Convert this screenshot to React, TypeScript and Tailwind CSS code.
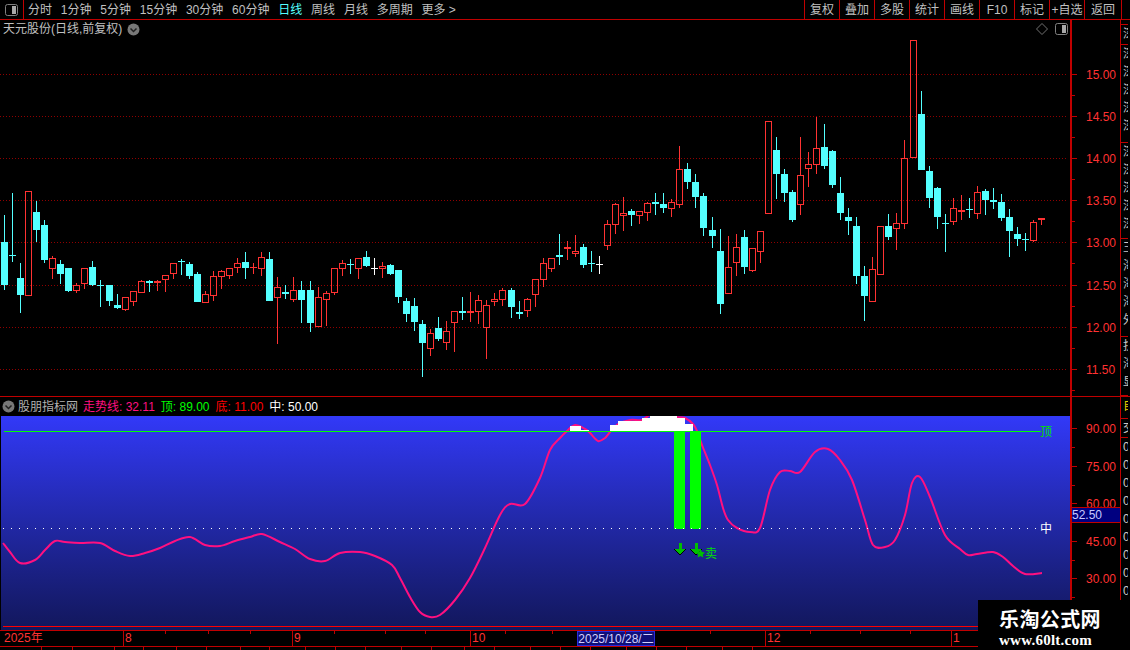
const font = "font-['Liberation_Sans','Noto_Sans_CJK_SC',sans-serif]"

type Kind = "r" | "c" | "w"
type Row = [number, number, number, number, Kind]

// hi, body top, body bottom, lo - read off 3x crops, y0 is the crop's origin
const seg = (y0: number, rows: Row[]): Row[] =>
  rows.map(([h, t, b, l, k]) => [y0 + h / 3, y0 + t / 3, y0 + b / 3, y0 + l / 3, k])

const candles: Row[] = [
  ...seg(180, [
    [105, 186, 315, 330, "c"], [40, 226, 228, 245, "c"], [250, 294, 345, 398, "c"], [34, 34, 347, 347, "r"],
    [63, 96, 150, 186, "c"], [120, 135, 240, 248, "c"], [228, 235, 266, 297, "r"], [240, 252, 282, 312, "c"],
    [264, 264, 333, 336, "c"], [309, 316, 332, 338, "r"], [265, 265, 311, 327, "r"], [243, 261, 315, 318, "c"],
    [300, 315, 317, 381, "c"], [315, 315, 363, 378, "c"], [342, 375, 384, 387, "c"], [352, 352, 389, 393, "r"],
    [334, 334, 365, 378, "r"], [300, 304, 338, 338, "r"], [300, 303, 309, 336, "c"], [300, 304, 308, 333, "r"],
    [286, 286, 299, 336, "r"], [250, 250, 281, 297, "r"], [237, 244, 247, 285, "c"], [246, 252, 288, 297, "c"],
    [276, 282, 366, 366, "c"], [333, 343, 368, 368, "r"], [273, 289, 347, 363, "r"], [270, 274, 290, 327, "r"],
    [265, 265, 287, 297, "r"], [234, 250, 263, 279, "r"], [216, 246, 264, 297, "c"], [249, 262, 265, 282, "r"],
    [216, 232, 266, 288, "r"], [216, 237, 363, 363, "c"], [291, 322, 353, 492, "r"], [315, 336, 342, 357, "c"],
    [291, 331, 359, 366, "r"], [303, 330, 360, 429, "c"], [303, 330, 429, 456, "c"], [321, 352, 440, 440, "r"],
    [333, 340, 359, 438, "r"], [265, 265, 338, 345, "r"], [240, 250, 266, 288, "r"], [237, 252, 254, 282, "c"],
    [235, 235, 266, 297, "r"],
  ]),
  ...seg(190, [
    [183, 201, 228, 231, "c"], [204, 234, 236, 255, "w"], [216, 229, 236, 264, "r"], [222, 225, 252, 255, "c"],
    [240, 240, 321, 339, "c"], [324, 333, 372, 396, "c"], [324, 348, 396, 423, "c"], [390, 402, 459, 561, "c"],
    [417, 430, 476, 498, "r"], [381, 414, 447, 453, "c"], [393, 424, 458, 480, "r"], [364, 364, 398, 486, "r"],
    [321, 363, 368, 390, "c"], [306, 364, 368, 396, "r"], [315, 331, 365, 402, "r"], [330, 346, 413, 507, "r"],
    [309, 328, 335, 348, "r"], [294, 301, 329, 348, "r"], [294, 300, 351, 384, "c"], [333, 366, 372, 387, "c"],
    [325, 328, 362, 381, "r"], [268, 268, 314, 351, "r"], [204, 220, 269, 291, "r"], [205, 205, 236, 246, "r"],
    [132, 195, 201, 225, "c"], [153, 171, 176, 210, "r"], [135, 184, 191, 201, "r"], [162, 171, 225, 234, "c"],
    [183, 219, 221, 246, "c"], [198, 222, 224, 252, "w"], [90, 103, 167, 180, "r"], [40, 43, 104, 132, "r"],
    [21, 70, 77, 123, "r"], [57, 63, 75, 108, "c"], [63, 64, 77, 102, "r"], [37, 40, 68, 93, "r"],
    [9, 36, 42, 75, "c"], [9, 42, 54, 69, "c"], [27, 37, 56, 81, "r"],
  ]),
  ...seg(130, [
    [48, 118, 224, 234, "r"], [99, 117, 156, 177, "c"], [132, 156, 201, 234, "c"], [189, 198, 294, 318, "c"],
  ]),
  ...seg(30, [
    [561, 600, 618, 654, "c"], [597, 663, 822, 852, "c"], [618, 712, 791, 791, "r"], [612, 652, 698, 738, "r"],
    [600, 621, 711, 732, "c"], [655, 655, 722, 725, "r"], [604, 604, 665, 699, "r"], [274, 274, 551, 551, "r"],
    [321, 360, 432, 507, "c"], [417, 432, 489, 516, "c"], [480, 486, 570, 576, "c"], [321, 436, 524, 555, "r"],
    [366, 403, 416, 471, "r"], [261, 355, 404, 432, "r"], [282, 351, 408, 417, "c"], [360, 363, 465, 474, "c"],
    [441, 489, 549, 570, "c"], [534, 561, 573, 615, "c"], [561, 588, 738, 762, "c"], [708, 738, 798, 873, "c"],
    [681, 718, 815, 815, "r"], [589, 589, 734, 734, "r"], [552, 588, 621, 630, "c"], [549, 580, 596, 660, "r"],
    [330, 385, 581, 597, "r"], [31, 31, 383, 383, "r"], [183, 252, 420, 420, "c"], [408, 423, 504, 534, "c"],
    [471, 474, 561, 597, "c"], [552, 579, 581, 666, "c"], [504, 535, 575, 585, "r"], [495, 541, 545, 570, "r"],
    [504, 537, 539, 564, "c"], [468, 487, 551, 567, "r"], [477, 483, 510, 555, "c"], [474, 510, 515, 537, "c"],
    [492, 516, 564, 573, "c"], [537, 561, 603, 681, "c"], [591, 612, 627, 648, "c"], [609, 627, 629, 663, "c"],
    [570, 577, 632, 636, "r"], [565, 565, 571, 585, "r"],
  ]),
]

const priceTicks = [
  [74, "15.00"], [116, "14.50"], [158, "14.00"], [200, "13.50"],
  [242, "13.00"], [285, "12.50"], [327, "12.00"], [369, "11.50"],
] as const

const indicatorTicks = [
  [428, "90.00"], [466, "75.00"], [503, "60.00"], [541, "45.00"], [578, "30.00"],
] as const

const trendPoints = [
  [3, 543], [10, 552], [20, 563], [35, 560], [45, 550], [55, 541], [65, 542], [80, 543], [100, 543], [115, 551],
  [130, 556], [145, 553], [160, 548], [175, 541], [190, 537], [205, 545], [220, 546], [235, 541], [250, 537], [262, 534],
  [280, 542], [295, 549], [310, 559], [325, 561], [340, 553], [360, 552], [375, 556], [392, 565], [400, 578], [410, 597],
  [420, 612], [430, 617], [440, 615], [455, 600], [470, 578], [485, 548], [500, 515], [510, 504], [525, 504], [540, 478],
  [550, 450], [560, 438], [567, 431], [575, 425], [585, 429], [590, 433], [598, 441], [605, 438], [610, 432], [618, 424],
  [630, 420], [642, 420], [650, 415], [660, 415], [670, 415], [677, 417], [685, 418], [693, 424], [697, 431], [702, 445],
  [710, 465], [717, 485], [723, 508], [728, 520], [737, 528], [750, 532], [760, 528], [770, 490], [780, 472], [790, 471],
  [800, 472], [815, 452], [828, 449], [840, 460], [852, 480], [865, 520], [873, 545], [885, 547], [895, 540], [905, 515],
  [912, 483], [920, 477], [930, 497], [945, 535], [960, 549], [968, 555], [977, 554], [993, 552], [1003, 557], [1013, 566],
  [1025, 574], [1042, 573],
]

// catmull-rom through the read-off points, the original curve has no corners
const smoothPath = (pts: number[][]) => {
  let d = `M${pts[0][0]} ${pts[0][1]}`
  for (let i = 0; i < pts.length - 1; i++) {
    const p0 = pts[Math.max(i - 1, 0)]
    const p1 = pts[i]
    const p2 = pts[i + 1]
    const p3 = pts[Math.min(i + 2, pts.length - 1)]
    d += ` C${p1[0] + (p2[0] - p0[0]) / 6} ${p1[1] + (p2[1] - p0[1]) / 6} ${p2[0] - (p3[0] - p1[0]) / 6} ${p2[1] - (p3[1] - p1[1]) / 6} ${p2[0]} ${p2[1]}`
  }
  return d
}

// part of the curve above the 顶 line is filled white
const whiteSteps = [
  [570, 581, 426], [581, 589, 430], [610, 618, 425], [618, 642, 421],
  [642, 650, 418], [650, 677, 416], [677, 685, 418], [685, 693, 424],
]

const leftItems = ["分时", "1分钟", "5分钟", "15分钟", "30分钟", "60分钟", "日线", "周线", "月线", "多周期", "更多 >"]
const rightItems = ["复权", "叠加", "多股", "统计", "画线", "F10", "标记", "+自选", "返回"]

const Toggle = ({ className }: { className?: string }) => (
  <svg width="13" height="12" viewBox="0 0 13 12" className={className}>
    <rect x="0.5" y="0.5" width="12" height="11" rx="2" fill="none" stroke="#808080" />
    <rect x="7" y="2" width="4" height="8" fill="#a8a8a8" />
  </svg>
)

const Chevron = () => (
  <svg width="13" height="13" viewBox="0 0 13 13" className="shrink-0">
    <circle cx="6.5" cy="6.5" r="6" fill="#787878" />
    <path d="M3.5 5.5 L6.5 8.5 L9.5 5.5" fill="none" stroke="#202020" strokeWidth="1.5" />
  </svg>
)

const Candle = ({ row, i }: { row: Row; i: number }) => {
  const [hi, top, bottom, lo, kind] = row
  const left = Math.round(1 + i * 8.04)
  const mid = left + 3.5
  const color = kind === "r" ? "#ff3232" : kind === "c" ? "#54ffff" : "#ffffff"
  const t = Math.round(top)
  const b = Math.max(Math.round(bottom), t + 1)
  return (
    <g shapeRendering="crispEdges">
      <line x1={mid} x2={mid} y1={Math.round(hi)} y2={t} stroke={color} />
      <line x1={mid} x2={mid} y1={b} y2={Math.round(lo)} stroke={color} />
      {kind === "r" && b - t > 2 ? (
        <rect x={left + 0.5} y={t + 0.5} width={6} height={b - t - 1} fill="none" stroke={color} />
      ) : (
        <rect x={left} y={t} width={7} height={b - t} fill={color} />
      )}
    </g>
  )
}

const PriceChart = () => (
  <div className="relative h-[376px] w-[1070px] shrink-0">
    <svg width="1070" height="376" viewBox="0 20 1070 376" className="block">
      {priceTicks.map(([y]) => (
        <line key={y} x1="0" x2="1066" y1={y + 0.5} y2={y + 0.5} stroke="#900000" strokeDasharray="1 2" shapeRendering="crispEdges" />
      ))}
      {candles.map((row, i) => (
        <Candle key={i} row={row} i={i} />
      ))}
    </svg>
    <div className="absolute left-[3px] top-[2px] flex items-center gap-[5px] text-[12px] leading-[14px] text-[#c0c0c0]">
      <span>天元股份(日线,前复权)</span>
      <Chevron />
    </div>
    <svg width="12" height="12" viewBox="0 0 12 12" className="absolute left-[1036px] top-[3px]">
      <path d="M6 0.5 L11.5 6 L6 11.5 L0.5 6 Z" fill="none" stroke="#707070" />
    </svg>
    <Toggle className="absolute left-[1055px] top-[3px]" />
  </div>
)

const Axis = ({ top, height, ticks, minor, children }: {
  top: number
  height: number
  ticks: readonly (readonly [number, string])[]
  minor: number[]
  children?: React.ReactNode
}) => (
  <div className="relative w-[50px] shrink-0 border-l-2 border-[#c00000]" style={{ height }}>
    <svg width="50" height={height} viewBox={`1072 ${top} 50 ${height}`} className="block">
      {ticks.map(([y, label]) => (
        <g key={label}>
          <line x1="1072" x2="1077" y1={y + 0.5} y2={y + 0.5} stroke="#c00000" shapeRendering="crispEdges" />
          <text x="1086" y={y + 5} className="fill-[#ff3232] text-[12px]">{label}</text>
        </g>
      ))}
      {minor.map((y) => (
        <line key={y} x1="1072" x2="1075" y1={y + 0.5} y2={y + 0.5} stroke="#c00000" shapeRendering="crispEdges" />
      ))}
    </svg>
    {children}
  </div>
)

const IndicatorPlot = () => (
  <div className="relative ml-px h-[214px] w-[1069px] bg-linear-to-b from-[#3239f8] to-[#12175c]">
    <svg width="1069" height="214" viewBox="1 416 1069 214" className="block">
      <path d={smoothPath(trendPoints)} fill="none" stroke="#ff1080" strokeWidth="2" strokeLinejoin="round" />
      {whiteSteps.map(([x1, x2, y]) => (
        <rect key={x1} x={x1} y={y} width={x2 - x1} height={431 - y} fill="#ffffff" />
      ))}
      <line x1="4" x2="1041" y1="431.5" y2="431.5" stroke="#00ff00" shapeRendering="crispEdges" />
      <rect x="674" y="431" width="11" height="98" fill="#00ff00" />
      <rect x="690" y="431" width="11" height="98" fill="#00ff00" />
      <line x1="3" x2="1040" y1="528.5" y2="528.5" stroke="#ffffff" strokeDasharray="1 7" shapeRendering="crispEdges" />
      <line x1="3" x2="1070" y1="626.5" y2="626.5" stroke="#ff0000" shapeRendering="crispEdges" />
      {[680, 696].map((x) => (
        <g key={x} shapeRendering="crispEdges">
          <path d={`M${x - 6} 549 L${x + 6} 549 L${x} 556 Z`} fill="#000000" />
          <rect x={x - 1.5} y="543" width="3" height="7" fill="#00c000" />
          <path d={`M${x - 5} 549 L${x + 5} 549 L${x} 554.5 Z`} fill="#00c000" />
        </g>
      ))}
      <path d="M700.5 549 L702 552 L705 552.5 L702.8 554.5 L703.3 557.5 L700.5 556 L697.7 557.5 L698.2 554.5 L696 552.5 L699 552 Z" fill="#00c000" />
      <text x="705" y="558" className="fill-[#00e000] text-[12px]">卖</text>
      <text x="1040" y="436" className="fill-[#00e000] text-[12px]">顶</text>
      <text x="1040" y="533" className="fill-[#ffffff] text-[12px]">中</text>
    </svg>
  </div>
)

const SideColumn = ({ groups }: { groups: { height: number; text: string; color?: string }[] }) => (
  <div className="flex w-[8px] shrink-0 flex-col overflow-hidden border-l border-[#c00000]">
    {groups.map((g, i) => (
      <div
        key={i}
        className="w-[24px] shrink-0 overflow-hidden border-b border-[#c00000] pl-[2px] text-[12px] leading-[18px]"
        style={{ height: g.height, color: g.color ?? "#c8c8c8" }}
      >
        {g.text.split("").map((ch, j) => (
          <div key={j}>{ch}</div>
        ))}
      </div>
    ))}
  </div>
)

export default function App() {
  return (
    <div className={`relative h-[650px] w-[1130px] overflow-hidden bg-black ${font}`}>
      <div className="flex h-[20px] items-stretch border-b border-[#c00000] text-[12px] text-[#c0c0c0]">
        <div className="flex w-[24px] items-center justify-center border-r border-[#c00000]">
          <Toggle />
        </div>
        <div className="flex items-center gap-[8.8px] pl-[4px]">
          {leftItems.map((item) => (
            <span key={item} className={item === "日线" ? "text-[#54ffff]" : ""}>{item}</span>
          ))}
        </div>
        <div className="ml-auto mr-[8px] flex">
          {rightItems.map((item) => (
            <span key={item} className="flex w-[35px] items-center justify-center border-l border-[#c00000] last:w-[38px] last:border-r">
              {item}
            </span>
          ))}
        </div>
      </div>

      <div className="flex h-[376px]">
        <PriceChart />
        <Axis top={20} height={376} ticks={priceTicks} minor={[95, 137, 179, 221, 263, 306, 348, 390]} />
        <SideColumn
          groups={[
            { height: 5, text: "" },
            { height: 20, text: "深" },
            { height: 98, text: "深深深深深" },
            { height: 96, text: "深深深深深" },
            { height: 98, text: "王海海海外" },
            { height: 59, text: "抗海显" },
          ]}
        />
      </div>
      <div className="h-px bg-[#c00000]" />

      <div className="flex h-[233px]">
        <div className="flex w-[1070px] shrink-0 flex-col">
          <div className="flex h-[19px] items-center pl-[2px] text-[12px]">
            <Chevron />
            <span className="ml-[3px] text-[#b0b0b0]">股朋指标网</span>
            <span className="ml-[5px] text-[#ff1080]">走势线: 32.11</span>
            <span className="ml-[6px] text-[#00ff00]">顶: 89.00</span>
            <span className="ml-[6px] text-[#ff0000]">底: 11.00</span>
            <span className="ml-[6px] text-white">中: 50.00</span>
          </div>
          <IndicatorPlot />
        </div>
        <Axis top={397} height={233} ticks={indicatorTicks} minor={[447, 485, 522, 560, 597]}>
          <div className="absolute left-0 top-[110px] flex h-[16px] w-[48px] items-center border-y border-[#c00000] bg-[#000080] text-[12px] text-[#c8c8ff]">
            52.50
          </div>
        </Axis>
        <SideColumn
          groups={[
            { height: 22, text: "自", color: "#e0d000" },
            { height: 19, text: "交" },
            { height: 192, text: "0000000000" },
          ]}
        />
      </div>

      <div className="relative flex h-[17px] border-y border-[#c00000] text-[12px] leading-[15px] text-[#ff3232]">
        <span className="w-[124px] border-r border-[#c00000] pl-[4px]">2025年</span>
        <span className="w-[169px] border-r border-[#c00000] pl-px">8</span>
        <span className="w-[178px] border-r border-[#c00000] pl-px">9</span>
        <span className="w-[106px] pl-px">10</span>
        <span className="w-[78px] border border-[#2828e0] bg-[#101078] text-center text-[#d0d0ff]">2025/10/28/二</span>
        <span className="w-[111px] border-r border-[#c00000]" />
        <span className="w-[186px] border-r border-[#c00000] pl-px">12</span>
        <span className="pl-px">1</span>
        <svg width="978" height="3" className="absolute left-0 top-0">
          {[165, 208, 250, 334, 385, 425, 505, 552, 625, 710, 810, 860, 910].map((x) => (
            <line key={x} x1={x + 0.5} x2={x + 0.5} y1="0" y2="3" stroke="#c00000" shapeRendering="crispEdges" />
          ))}
        </svg>
      </div>

      <div className="flex h-[3px] overflow-hidden">
        {[42, 31, 42, 29, 33, 30, 34, 29, 36, 30, 30, 36, 30, 33, 30, 36, 30, 30, 36, 30, 30, 36, 30].map((w, i) => (
          <span key={i} className="border-r border-[#c00000]" style={{ width: w }} />
        ))}
      </div>

      <div className="absolute bottom-0 right-0 flex h-[50px] w-[152px] flex-col items-start bg-black pl-[21px] pt-[8px] text-white">
        <span className="text-[20px] font-bold leading-[24px] tracking-[0.4px]">乐淘公式网</span>
        <span className="font-['Liberation_Serif',serif] text-[15px] font-bold leading-[16px] tracking-[0.25px]">www.60lt.com</span>
      </div>
    </div>
  )
}
